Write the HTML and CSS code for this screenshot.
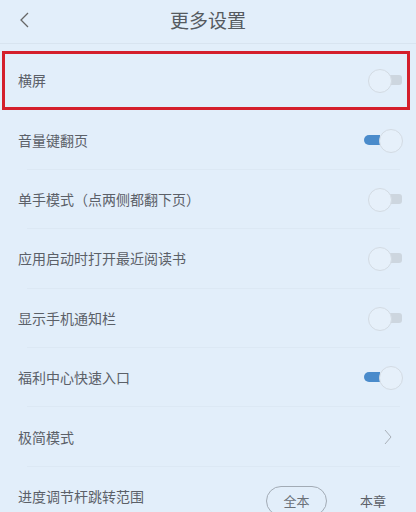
FILE: index.html
```html
<!DOCTYPE html>
<html lang="zh-CN">
<head>
    <meta charset="UTF-8">
    <meta name="viewport" content="width=device-width, initial-scale=1.0">
    <title>更多设置</title>
    <link rel="stylesheet" href="styles.css">
</head>
<body>
    <div id="page">
        <div class="header">
            <svg class="back" width="12" height="18" viewBox="0 0 12 18">
                <path d="M9 2 L2 9 L9 16" fill="none" stroke="#666" stroke-width="1.3"/>
            </svg>
            <h1>更多设置</h1>
        </div>

        <div class="list">
            <div class="row marked">
                <span>横屏</span>
                <span class="toggle"></span>
            </div>
            <div class="sep"></div>
            <div class="row">
                <span>音量键翻页</span>
                <span class="toggle on"></span>
            </div>
            <div class="sep"></div>
            <div class="row">
                <span>单手模式（点两侧都翻下页）</span>
                <span class="toggle"></span>
            </div>
            <div class="sep"></div>
            <div class="row">
                <span>应用启动时打开最近阅读书</span>
                <span class="toggle"></span>
            </div>
            <div class="sep"></div>
            <div class="row">
                <span>显示手机通知栏</span>
                <span class="toggle"></span>
            </div>
            <div class="sep"></div>
            <div class="row">
                <span>福利中心快速入口</span>
                <span class="toggle on"></span>
            </div>
            <div class="sep"></div>
            <div class="row">
                <span>极简模式</span>
                <svg class="more" width="8" height="16" viewBox="0 0 8 16">
                    <path d="M1 1 L7 8 L1 15" fill="none" stroke="#a9b0b8" stroke-width="1"/>
                </svg>
            </div>
            <div class="sep"></div>
            <div class="row">
                <span>进度调节杆跳转范围</span>
                <div class="range">
                    <span class="pill">全本</span>
                    <span class="plain">本章</span>
                </div>
            </div>
        </div>
    </div>
</body>
</html>
```

FILE: styles.css
```css
* {
    margin: 0;
    padding: 0;
    box-sizing: border-box;
    font-family: "Noto Sans CJK SC", "Noto Sans", sans-serif;
}

body {
    background-color: #e2eefa;
    color: #5b6068;
}

#page {
    width: 416px;
    height: 512px;
    overflow: hidden;
}

.header {
    height: 44px;
    display: flex;
    align-items: center;
    justify-content: center;
    position: relative;
    border-bottom: 1px solid #d8e4f0;
}

.header h1 {
    font-size: 19px;
    font-weight: 400;
    color: #555a60;
    margin-top: -4px;
}

.back {
    position: absolute;
    left: 19px;
    top: 11px;
}

.list {
    margin-top: 7px;
}

.row {
    height: 58.4px;
    padding: 0 14px 0 18px;
    display: flex;
    align-items: center;
    justify-content: space-between;
    font-size: 14px;
    position: relative;
}

.row span {
    line-height: 1;
}

.marked::after {
    content: "";
    position: absolute;
    left: 2px;
    right: 6px;
    top: 0;
    height: 53px;
    border: 3px solid #d41f2b;
}

.sep {
    height: 1px;
    margin: 0 16px 0 27px;
    background-color: #dce8f4;
}

.toggle {
    width: 38px;
    height: 22px;
    position: relative;
}

.toggle::before {
    content: "";
    position: absolute;
    top: 6px;
    right: 0;
    width: 16px;
    height: 10px;
    border-radius: 0 3px 3px 0;
    background-color: #cdd6df;
}

.toggle::after {
    content: "";
    position: absolute;
    top: 0;
    left: 4px;
    width: 22px;
    height: 22px;
    border-radius: 50%;
    border: 1px solid #d3dbe3;
    background-color: #e6f0fa;
}

.toggle.on::before {
    left: 0;
    right: auto;
    border-radius: 5px 0 0 5px;
    background-color: #4a8bcb;
}

.toggle.on::after {
    left: 15px;
}

.more {
    margin-right: 10px;
}

.range {
    display: flex;
    align-items: center;
    margin-top: 10px;
}

.pill {
    width: 61px;
    height: 30px;
    border: 1px solid #a2abb5;
    border-radius: 15px;
    display: flex;
    align-items: center;
    justify-content: center;
    font-size: 13px;
    color: #6a7078;
}

.plain {
    margin-left: 33px;
    margin-right: 16px;
    font-size: 13px;
    color: #5b6068;
}
```
